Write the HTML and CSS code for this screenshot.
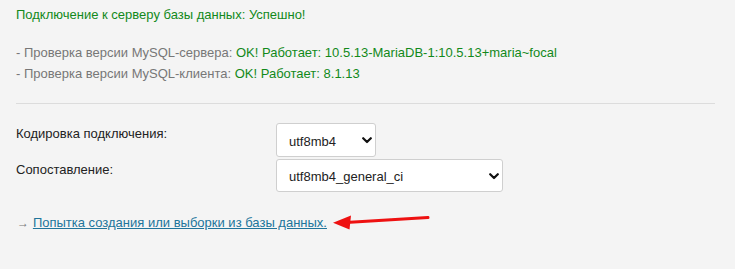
FILE: index.html
```html
<!DOCTYPE html>
<html lang="ru">
<head>
<meta charset="utf-8">
<title>Проверка подключения</title>
<link rel="stylesheet" href="styles.css">
</head>
<body>
<div class="page">
  <p class="ok">Подключение к серверу базы данных: Успешно!</p>
  <p class="checks">
    <span class="check">- Проверка версии MySQL-сервера: <span class="ok">OK! Работает: 10.5.13-MariaDB-1:10.5.13+maria~focal</span></span>
    <span class="check">- Проверка версии MySQL-клиента: <span class="ok">OK! Работает: 8.1.13</span></span>
  </p>
  <hr class="sep">
  <div class="form">
    <label class="label" for="charset">Кодировка подключения:</label>
    <div class="field">
      <select id="charset" class="sel sel-short"><option>utf8mb4</option></select>
      <svg class="chev" width="10" height="7" viewBox="0 0 10 7"><path d="M1.2 1.2 L5 5 L8.8 1.2" fill="none" stroke="#111" stroke-width="2.2" stroke-linecap="round" stroke-linejoin="round"/></svg>
    </div>
    <label class="label" for="coll">Сопоставление:</label>
    <div class="field">
      <select id="coll" class="sel sel-long"><option>utf8mb4_general_ci</option></select>
      <svg class="chev" width="10" height="7" viewBox="0 0 10 7"><path d="M1.2 1.2 L5 5 L8.8 1.2" fill="none" stroke="#111" stroke-width="2.2" stroke-linecap="round" stroke-linejoin="round"/></svg>
    </div>
  </div>
  <p class="next"><span class="arr">→</span> <a href="#">Попытка создания или выборки из базы данных.</a></p>
</div>
<svg class="annot" width="735" height="269" viewBox="0 0 735 269">
  <line x1="428" y1="217.5" x2="346" y2="222.5" stroke="#ee1111" stroke-width="3" stroke-linecap="round"/>
  <polygon points="333,222.8 351,215.5 349.5,229.5" fill="#ee1111"/>
</svg>
</body>
</html>
```

FILE: styles.css
```css
html, body {
  margin: 0;
  padding: 0;
  background: #f4f4f4;
}
body {
  font-family: "Liberation Sans", Arial, sans-serif;
  font-size: 13px;
  color: #222;
  position: relative;
  width: 735px;
  height: 269px;
  overflow: hidden;
}
.page {
  padding: 4px 20px 0 16px;
}
p {
  margin: 0;
  line-height: 21px;
}
.ok {
  color: #12891a;
}
.checks {
  margin-top: 17px;
  color: #777;
}
.check {
  display: block;
}
.sep {
  border: 0;
  border-top: 1px solid #dcdcdc;
  margin: 19px 0 19px 0;
  height: 0;
}
.form {
  display: grid;
  grid-template-columns: 260px auto;
  row-gap: 2px;
  align-items: start;
}
.label {
  padding-top: 2px;
  line-height: 17px;
  color: #222;
}
.field {
  position: relative;
  justify-self: start;
}
.sel {
  appearance: none;
  -webkit-appearance: none;
  display: block;
  height: 34px;
  border: 1px solid #cfcfcf;
  border-radius: 3px;
  background: #fff;
  font-family: "Liberation Sans", Arial, sans-serif;
  font-size: 13px;
  color: #222;
  padding: 2px 24px 0 12px;
  margin: 0;
}
.sel-short {
  width: 100px;
}
.sel-long {
  width: 227px;
  height: 33px;
}
.chev {
  position: absolute;
  right: 4px;
  top: 50%;
  margin-top: -3px;
  pointer-events: none;
}
.next {
  margin-top: 20px;
  color: #777;
  font-size: 14px;
}
.arr {
  font-size: 12px;
  margin-left: 1px;
}
.next a {
  color: #21759b;
  text-decoration: underline;
  font-size: 13px;
}
.annot {
  position: absolute;
  left: 0;
  top: 0;
  pointer-events: none;
}
```
